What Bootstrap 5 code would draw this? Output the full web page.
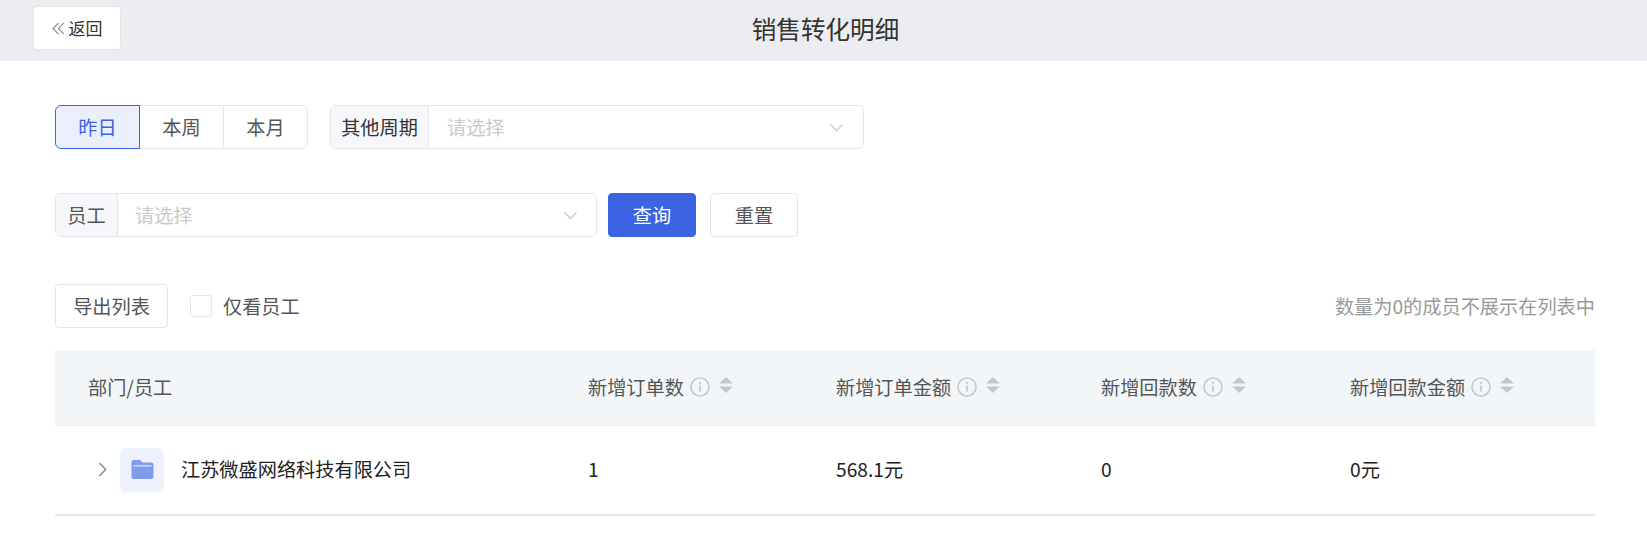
<!DOCTYPE html>
<html lang="zh-CN">
<head>
<meta charset="utf-8">
<title>销售转化明细</title>
<link rel="stylesheet" href="https://cdn.jsdelivr.net/npm/bootstrap@5.3.0/dist/css/bootstrap.min.css">
<style>
body{font-family:"Noto Sans CJK SC","Noto Sans",sans-serif;font-size:19.2px;color:#555;background:#fff;line-height:1.5}
.top-strip{height:61px;background:#ecedf1;padding-left:33px;padding-top:6px}
.back-btn{width:88px;height:44px;padding:0;font-size:17px;color:#333;background:#fff;border:1px solid #e4e5e8;border-radius:4px;display:flex;align-items:center;justify-content:center;gap:4px}
.back-btn svg{width:13px;height:13px}
.page-title{flex:1;text-align:center;font-size:24.6px;font-weight:400;color:#333;margin:0;padding-right:117px;line-height:44px}
.page-body{padding:44px 52px 0 55px}
.filter-row{height:44px;margin-bottom:44px}
.seg-btn{width:85px;height:44px;padding:0;font-size:19.2px;color:#555;background:#fff;border:1px solid #e4e5e8;margin-left:-1px;border-radius:0;display:flex;align-items:center;justify-content:center}
.seg-btn:first-child{margin-left:0;border-radius:6px 0 0 6px}
.seg-btn:last-child{border-radius:0 6px 6px 0}
.seg-btn.is-on{color:#3b63e2;background:#ebeffc;border-color:#3b63e2;position:relative;z-index:1}
.pick{height:44px;border:1px solid #e4e5e8;border-radius:6px;display:flex;overflow:hidden;background:#fff}
.pick-label{background:#f6f7fb;border-right:1px solid #e4e5e8;display:flex;align-items:center;justify-content:center;color:#333;flex:none}
.pick-value{flex:1;display:flex;align-items:center;justify-content:space-between;color:#c9c9c9}
.pick-a{width:534px;margin-left:22px}
.pick-a .pick-label{width:98px}
.pick-a .pick-value{padding:0 19px 0 18px}
.pick-b{width:542px}
.pick-b .pick-label{width:62px;color:#555}
.pick-b .pick-value{padding:0 18px 0 17px}
.chev{width:15px;height:9px}
.act-btn{width:88px;height:44px;padding:0;font-size:19.2px;border-radius:4px;display:flex;align-items:center;justify-content:center}
.act-primary{background:#3b63e2;color:#fff;border:1px solid #3b63e2;margin-left:11px}
.act-plain{background:#fff;color:#555;border:1px solid #e4e5e8;margin-left:14px}
.tool-row{height:44px;margin-top:47px;margin-bottom:22px}
.export-btn{width:113px;height:44px;padding:0;font-size:19.2px;color:#555;background:#fff;border:1px solid #e4e5e8;border-radius:4px}
.check-box{width:22px;height:22px;border:1px solid #e4e5e8;border-radius:3px;margin:0 11px 0 22px;background:#fff;display:block}
.note-text{margin-left:auto;color:#999}
.data-table{table-layout:fixed;width:1540px;margin:0;border-collapse:collapse}
.data-table th,.data-table td{padding:0;font-weight:400;vertical-align:middle;background:transparent;box-shadow:none}
.data-table thead tr{height:75px;background:#f3f6f9;border-bottom:1px solid #e9ecf1}
.data-table thead th{color:#555;border:0}
.data-table tbody tr{height:90px;border-bottom:2px solid #e6e6e6}
.data-table tbody td{color:#222;border:0}
.w-a{width:533px}.w-b{width:248px}.w-c{width:265px}.w-d{width:249px}.w-e{width:245px}
.head-first{padding-left:33px!important}
.head-cell{display:flex;align-items:center}
.info-ico{width:20px;height:20px;margin-left:6px;flex:none}
.sort-ico{width:14px;height:16px;margin:-4px 0 0 9px;flex:none}
.org-cell{display:flex;align-items:center;padding-left:43px}
.fold-ico{width:9px;height:15px;flex:none}
.fold-tile{width:44px;height:44px;border-radius:6px;background:#eef2fd;margin:0 17px 0 13px;display:flex;align-items:center;justify-content:center;flex:none}
.fold-tile svg{width:23px;height:20px;margin-top:-2px}
</style>
</head>
<body>
<div class="top-strip d-flex">
  <button type="button" class="btn back-btn"><svg viewBox="0 0 12 12" fill="none" stroke="#8a8a8a" stroke-width="1"><path d="M6 .8 .9 6 6 11.2M11 .8 5.9 6 11 11.2"/></svg>返回</button>
  <h1 class="page-title">销售转化明细</h1>
</div>
<div class="page-body">
  <div class="filter-row d-flex align-items-center">
    <div class="d-flex">
      <button type="button" class="btn seg-btn is-on">昨日</button>
      <button type="button" class="btn seg-btn">本周</button>
      <button type="button" class="btn seg-btn">本月</button>
    </div>
    <div class="pick pick-a">
      <div class="pick-label">其他周期</div>
      <div class="pick-value"><span>请选择</span><svg class="chev" viewBox="0 0 14 9" fill="none" stroke="#c9c9c9" stroke-width="1.3"><path d="M1 1.5 7 7.5 13 1.5"/></svg></div>
    </div>
  </div>
  <div class="filter-row d-flex align-items-center mb-0">
    <div class="pick pick-b">
      <div class="pick-label">员工</div>
      <div class="pick-value"><span>请选择</span><svg class="chev" viewBox="0 0 14 9" fill="none" stroke="#c9c9c9" stroke-width="1.3"><path d="M1 1.5 7 7.5 13 1.5"/></svg></div>
    </div>
    <button type="button" class="btn act-btn act-primary">查询</button>
    <button type="button" class="btn act-btn act-plain">重置</button>
  </div>
  <div class="tool-row d-flex align-items-center">
    <button type="button" class="btn export-btn">导出列表</button>
    <span class="check-box"></span>
    <span>仅看员工</span>
    <span class="note-text">数量为0的成员不展示在列表中</span>
  </div>
  <table class="table data-table">
    <colgroup><col class="w-a"><col class="w-b"><col class="w-c"><col class="w-d"><col class="w-e"></colgroup>
    <thead>
      <tr>
        <th class="head-first">部门/员工</th>
        <th><div class="head-cell">新增订单数<svg class="info-ico" viewBox="0 0 19 19"><circle cx="9.5" cy="9.5" r="8.6" fill="none" stroke="#c8c8c8" stroke-width="1.5"/><rect x="8.7" y="8" width="1.6" height="6" fill="#c8c8c8"/><circle cx="9.5" cy="5.6" r="1.1" fill="#c8c8c8"/></svg><svg class="sort-ico" viewBox="0 0 13 15" fill="#c6c6c6"><path d="M6.5 0 13 6H0zM0 9h13l-6.5 6z"/></svg></div></th>
        <th><div class="head-cell">新增订单金额<svg class="info-ico" viewBox="0 0 19 19"><circle cx="9.5" cy="9.5" r="8.6" fill="none" stroke="#c8c8c8" stroke-width="1.5"/><rect x="8.7" y="8" width="1.6" height="6" fill="#c8c8c8"/><circle cx="9.5" cy="5.6" r="1.1" fill="#c8c8c8"/></svg><svg class="sort-ico" viewBox="0 0 13 15" fill="#c6c6c6"><path d="M6.5 0 13 6H0zM0 9h13l-6.5 6z"/></svg></div></th>
        <th><div class="head-cell">新增回款数<svg class="info-ico" viewBox="0 0 19 19"><circle cx="9.5" cy="9.5" r="8.6" fill="none" stroke="#c8c8c8" stroke-width="1.5"/><rect x="8.7" y="8" width="1.6" height="6" fill="#c8c8c8"/><circle cx="9.5" cy="5.6" r="1.1" fill="#c8c8c8"/></svg><svg class="sort-ico" viewBox="0 0 13 15" fill="#c6c6c6"><path d="M6.5 0 13 6H0zM0 9h13l-6.5 6z"/></svg></div></th>
        <th><div class="head-cell">新增回款金额<svg class="info-ico" viewBox="0 0 19 19"><circle cx="9.5" cy="9.5" r="8.6" fill="none" stroke="#c8c8c8" stroke-width="1.5"/><rect x="8.7" y="8" width="1.6" height="6" fill="#c8c8c8"/><circle cx="9.5" cy="5.6" r="1.1" fill="#c8c8c8"/></svg><svg class="sort-ico" viewBox="0 0 13 15" fill="#c6c6c6"><path d="M6.5 0 13 6H0zM0 9h13l-6.5 6z"/></svg></div></th>
      </tr>
    </thead>
    <tbody>
      <tr>
        <td><div class="org-cell"><svg class="fold-ico" viewBox="0 0 8 14" fill="none" stroke="#8a7f78" stroke-width="1.2"><path d="M1 1 7 7 1 13"/></svg><div class="fold-tile"><svg viewBox="0 0 22 20"><path d="M2 1h6.5l2.4 2.5H20a2 2 0 0 1 2 2V18a2 2 0 0 1-2 2H2a2 2 0 0 1-2-2V3a2 2 0 0 1 2-2z" fill="#7f9bee"/><rect x="2" y="6.2" width="18" height="1.3" fill="#dfe6fb"/></svg></div>江苏微盛网络科技有限公司</div></td>
        <td>1</td>
        <td>568.1元</td>
        <td>0</td>
        <td>0元</td>
      </tr>
    </tbody>
  </table>
</div>
<script src="https://cdn.jsdelivr.net/npm/bootstrap@5.3.0/dist/js/bootstrap.bundle.min.js"></script>
</body>
</html>
